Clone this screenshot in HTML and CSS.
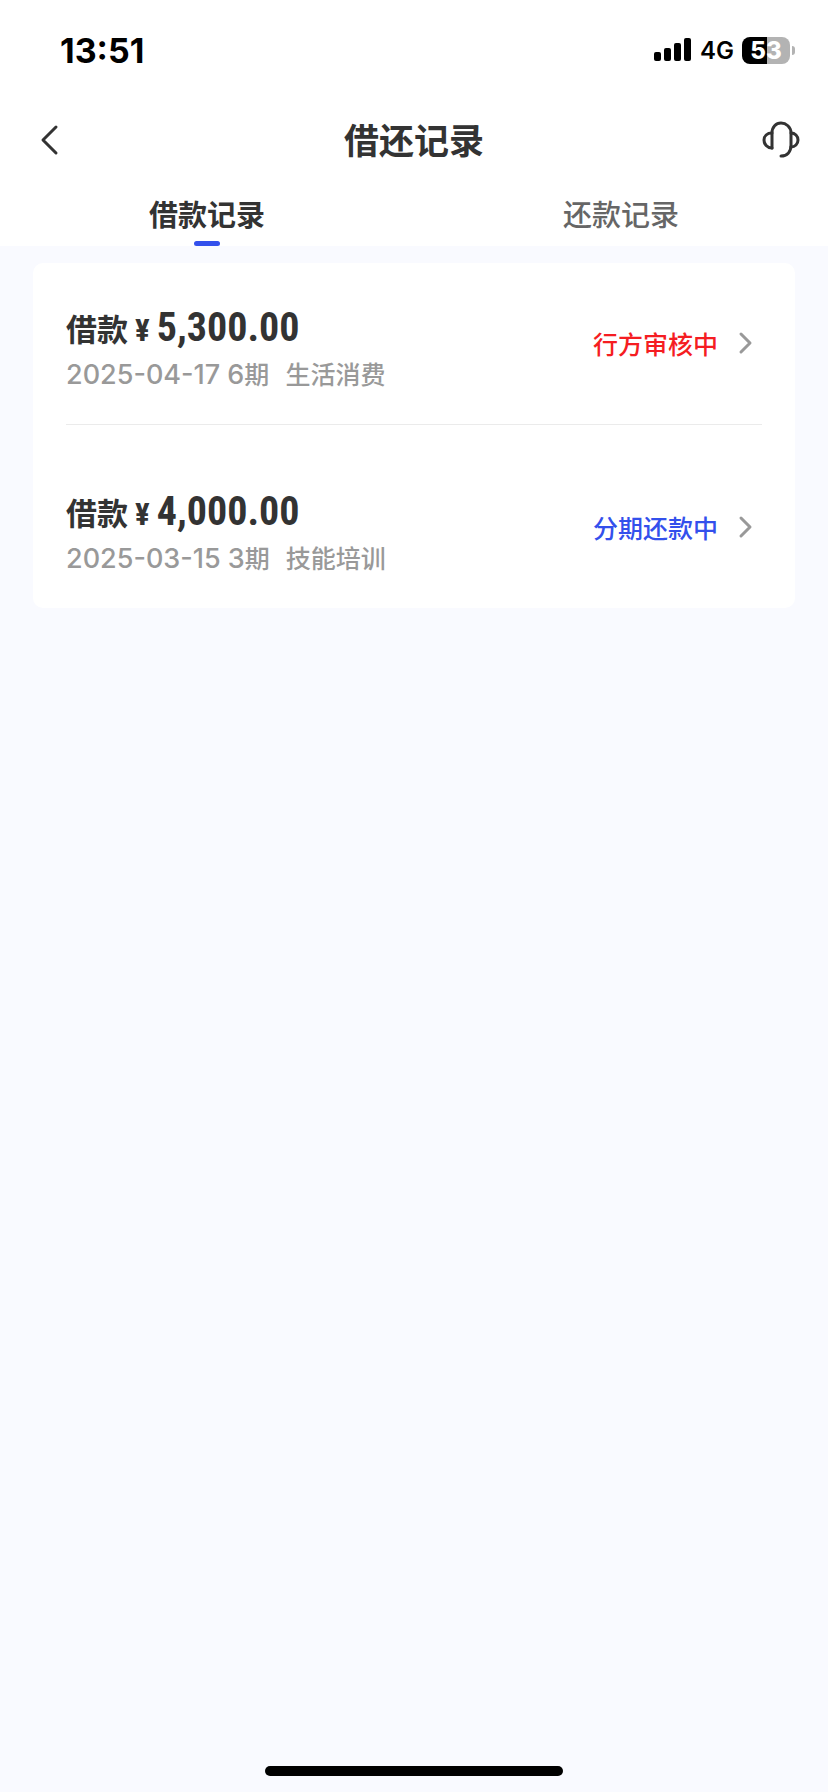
FILE: index.html
```
<!DOCTYPE html>
<html lang="zh-CN">

<head>
    <meta charset="UTF-8">
    <meta name="viewport" content="width=device-width, initial-scale=1">
    <title>借还记录</title>
    <link rel="stylesheet" href="styles.css">
</head>

<body>
    <div class="status-bar">
        <span class="time">13:51</span>
        <div class="status-icons">
            <svg class="signal" width="38" height="24" viewBox="0 0 38 24">
                <rect x="0" y="14" width="7" height="9" rx="2" />
                <rect x="10" y="10" width="7" height="13" rx="2" />
                <rect x="20" y="5" width="7" height="18" rx="2" />
                <rect x="30" y="0" width="7" height="23" rx="2" />
            </svg>
            <span class="network">4G</span>
            <div class="battery">
                <span class="battery-level">53</span>
            </div>
        </div>
    </div>

    <header class="nav">
        <button class="nav-btn" aria-label="返回">
            <svg width="38" height="38" viewBox="0 0 38 38">
                <path d="M28 6L15 19L28 32" />
            </svg>
        </button>
        <h1>借还记录</h1>
        <button class="nav-btn" aria-label="客服">
            <svg width="38" height="38" viewBox="0 0 38 38">
                <path d="M10 27V12C10 6 14 2 19 2C24 2 29 6 29 12V24C29 31 25 35 19 35" />
                <path d="M10 12C5 12 2 15 2 19C2 23 5 27 10 27" />
                <path d="M29 12C33 12 36 15 36 19C36 23 33 26 29 26" />
            </svg>
        </button>
    </header>

    <nav class="tabs">
        <button class="tab active">借款记录</button>
        <button class="tab">还款记录</button>
    </nav>

    <main>
        <div class="card">
            <a class="record" href="#">
                <div class="info">
                    <div class="title">借款<span class="yen">¥</span><span class="amount">5,300.00</span></div>
                    <div class="detail"><span><span class="date">2025-04-17 6</span>期</span><span>生活消费</span></div>
                </div>
                <span class="state red">行方审核中</span>
                <svg class="arrow" width="16" height="24" viewBox="0 0 16 24">
                    <path d="M3 3L12 12L3 21" />
                </svg>
            </a>
            <a class="record" href="#">
                <div class="info">
                    <div class="title">借款<span class="yen">¥</span><span class="amount">4,000.00</span></div>
                    <div class="detail"><span><span class="date">2025-03-15 3</span>期</span><span>技能培训</span></div>
                </div>
                <span class="state blue">分期还款中</span>
                <svg class="arrow" width="16" height="24" viewBox="0 0 16 24">
                    <path d="M3 3L12 12L3 21" />
                </svg>
            </a>
        </div>
    </main>

    <div class="home-bar"></div>
</body>

</html>
```
FILE: styles.css
```
* {
    box-sizing: border-box;
}

body {
    margin: 0;
    min-height: 100vh;
    display: flex;
    flex-direction: column;
    background: #f9faff;
    color: #333;
    font-family: Inter, "Noto Sans CJK SC", sans-serif;
}

button {
    border: none;
    padding: 0;
    background: none;
    color: inherit;
    font-family: inherit;
    cursor: pointer;
}

svg path {
    fill: none;
    stroke: #333;
    stroke-width: 3;
    stroke-linecap: round;
    stroke-linejoin: round;
}

/* status bar */
.status-bar {
    display: flex;
    justify-content: space-between;
    align-items: center;
    height: 100px;
    padding: 0 33px 0 60px;
    background: #fff;
    color: #000;
}

.time {
    font-size: 34px;
    font-weight: 700;
}

.status-icons {
    display: flex;
    align-items: center;
    gap: 8px;
}

.network {
    font-size: 24px;
    font-weight: 600;
}

.battery {
    position: relative;
    width: 48px;
    height: 27px;
    margin-right: 5px;
    border-radius: 8px;
    background: linear-gradient(to right, #000 53%, #b3b3b3 53%);
    color: #fff;
    font-size: 24px;
    font-weight: 800;
    line-height: 27px;
    text-align: center;
}

.battery::after {
    content: "";
    position: absolute;
    top: 9px;
    right: -5px;
    width: 3px;
    height: 9px;
    border-radius: 0 3px 3px 0;
    background: #b3b3b3;
}

/* header */
.nav {
    display: flex;
    justify-content: space-between;
    align-items: center;
    height: 80px;
    padding: 0 28px;
    background: #fff;
}

.nav-btn {
    display: flex;
    width: 38px;
}

h1 {
    margin: 0;
    padding-bottom: 4px;
    font-size: 35px;
    font-weight: 700;
}

.tabs {
    display: flex;
    background: #fff;
}

.tab {
    position: relative;
    flex: 1;
    height: 66px;
    color: #666;
    font-size: 29px;
    font-weight: 500;
}

.tab.active {
    color: #333;
    font-weight: 700;
}

.tab.active::after {
    content: "";
    position: absolute;
    left: 50%;
    bottom: 0;
    width: 26px;
    height: 5px;
    margin-left: -13px;
    border-radius: 3px;
    background: #3350ec;
}

/* records */
main {
    flex: 1;
    padding: 17px 33px;
}

.card {
    padding: 0 33px;
    border-radius: 10px;
    background: #fff;
}

.record {
    display: flex;
    align-items: center;
    padding: 32px 8px 33px 0;
    color: inherit;
    text-decoration: none;
}

.record + .record {
    padding-top: 54px;
    border-top: 1px solid #ebebeb;
}

.info {
    flex: 1;
}

.title {
    height: 64px;
    font-size: 31px;
    font-weight: 700;
    line-height: 66px;
}

.yen,
.amount {
    font-family: "Roboto Condensed", Roboto, sans-serif;
}

.yen {
    margin: 0 7px;
    font-size: 31px;
}

.amount {
    font-size: 40px;
}

.detail {
    display: flex;
    gap: 16px;
    color: #999;
    font-size: 25px;
    font-weight: 500;
    line-height: 32px;
}

.date {
    font-size: 27px;
}

.state {
    font-size: 25px;
    font-weight: 500;
}

.red {
    color: #f51d22;
}

.blue {
    color: #3350ec;
}

.arrow {
    margin-left: 20px;
}

.arrow path {
    stroke: #999;
}

.home-bar {
    width: 36%;
    height: 10px;
    margin: 0 auto 16px;
    border-radius: 5px;
    background: #000;
}
```
